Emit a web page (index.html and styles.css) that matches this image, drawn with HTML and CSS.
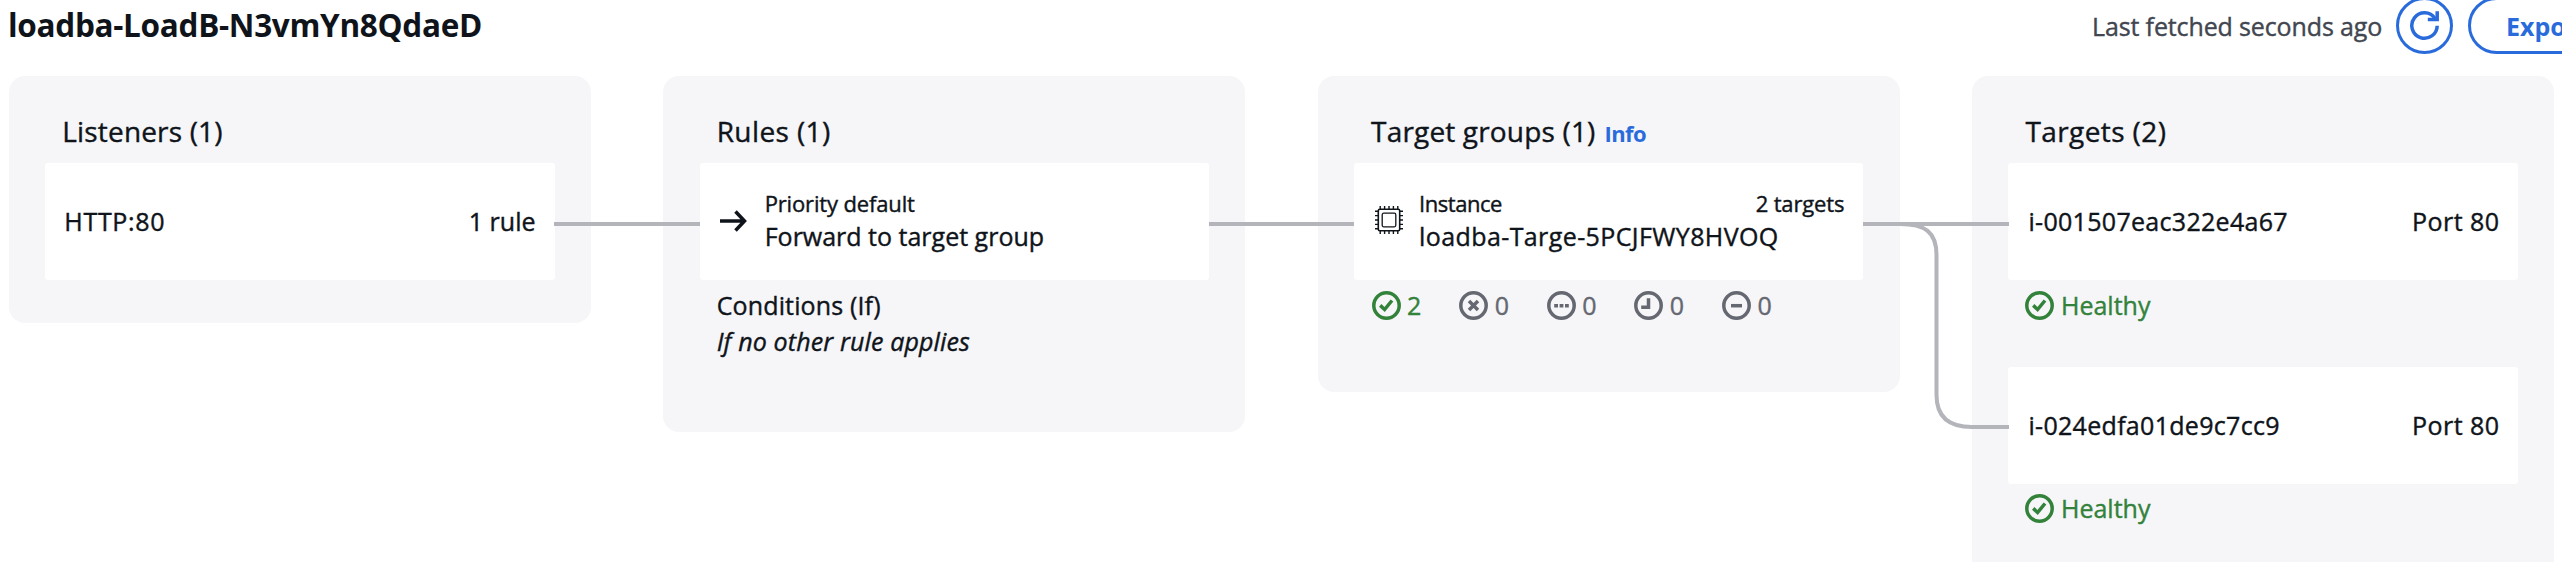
FILE: index.html
```html
<!DOCTYPE html>
<html lang="en">
<head>
<meta charset="utf-8">
<title>Resource map</title>
<link rel="stylesheet" href="styles.css">
</head>
<body>
<svg class="symbols" aria-hidden="true">
  <symbol id="ok" viewBox="0 0 29 29"><circle cx="14.5" cy="14.5" r="12.7" fill="none" stroke="currentColor" stroke-width="3.5"/><path d="M8.2 14.4l4.4 4.1 7.4-9" fill="none" stroke="currentColor" stroke-width="3.5"/></symbol>
  <symbol id="bad" viewBox="0 0 29 29"><circle cx="14.5" cy="14.5" r="12.7" fill="none" stroke="currentColor" stroke-width="3.5"/><path d="M10 10l9 9M19 10l-9 9" fill="none" stroke="currentColor" stroke-width="3.5"/></symbol>
  <symbol id="unused" viewBox="0 0 29 29"><circle cx="14.5" cy="14.5" r="12.7" fill="none" stroke="currentColor" stroke-width="3.5"/><path d="M7.2 13h3.8v3.5H7.2zM12.6 13h3.8v3.5h-3.8zM18 13h3.8v3.5H18z" fill="currentColor"/></symbol>
  <symbol id="pending" viewBox="0 0 29 29"><circle cx="14.5" cy="14.5" r="12.7" fill="none" stroke="currentColor" stroke-width="3.5"/><path d="M14.5 7.2v9H7.2" fill="none" stroke="currentColor" stroke-width="3.5"/></symbol>
  <symbol id="drain" viewBox="0 0 29 29"><circle cx="14.5" cy="14.5" r="12.7" fill="none" stroke="currentColor" stroke-width="3.5"/><path d="M9 14.7h11" fill="none" stroke="currentColor" stroke-width="3.5"/></symbol>
</svg>

<header class="header">
  <h1 class="title">loadba-LoadB-N3vmYn8QdaeD</h1>
  <div class="actions">
    <span class="fetched">Last fetched seconds ago</span>
    <button class="btn btn-round" aria-label="Refresh"><svg width="31" height="31" viewBox="0 0 31 31" fill="none" stroke="currentColor" stroke-width="3.5"><path d="M28.2 15.7A12.7 12.7 0 1 1 26 8.4"/><path d="M28.2 1.2v8.2H18.8"/></svg></button>
    <button class="btn btn-export">Export</button>
  </div>
</header>

<main class="map">
  <section class="card listeners">
    <h2 class="heading">Listeners (1)</h2>
    <div class="node"><span class="name wide">HTTP:80</span><span>1 rule</span></div>
  </section>

  <section class="card rules">
    <h2 class="heading loose">Rules (1)</h2>
    <div class="node">
      <svg class="arrow" width="27" height="22" viewBox="0 0 27 22" fill="none" stroke="currentColor" stroke-width="3.5"><path d="M0 11h24M15.5 1.5l9 9.5-9 9.5"/></svg>
      <div class="lines"><div class="small">Priority default</div><div class="forward">Forward to target group</div></div>
    </div>
    <div class="below">Conditions (If)</div>
    <div class="below italic">If no other rule applies</div>
  </section>

  <section class="card groups">
    <h2 class="heading">Target groups (1) <a class="info">Info</a></h2>
    <div class="node">
      <svg class="chip" width="28" height="28" viewBox="0 0 28 28" fill="none" stroke="currentColor"><rect x="3.3" y="3.3" width="21.4" height="21.4" rx="1.5" stroke-width="1.6"/><rect x="7.2" y="7.2" width="13.6" height="13.6" rx="1.5" stroke-width="1.3"/><path stroke-width="1.4" d="M5.2 0v3M9.6 0v3M14 0v3M18.4 0v3M22.8 0v3M5.2 25v3M9.6 25v3M14 25v3M18.4 25v3M22.8 25v3M0 5.2h3M0 9.6h3M0 14h3M0 18.4h3M0 22.8h3M25 5.2h3M25 9.6h3M25 14h3M25 18.4h3M25 22.8h3"/></svg>
      <div class="lines">
        <div class="small split"><span class="kind">Instance</span><span>2 targets</span></div>
        <div class="group-name">loadba-Targe-5PCJFWY8HVOQ</div>
      </div>
    </div>
    <div class="counts">
      <span class="status healthy"><svg class="icon"><use href="#ok"/></svg>2</span>
      <span class="status"><svg class="icon"><use href="#bad"/></svg>0</span>
      <span class="status"><svg class="icon"><use href="#unused"/></svg>0</span>
      <span class="status"><svg class="icon"><use href="#pending"/></svg>0</span>
      <span class="status"><svg class="icon"><use href="#drain"/></svg>0</span>
    </div>
  </section>

  <section class="card targets">
    <h2 class="heading loose">Targets (2)</h2>
    <div class="node"><span class="name id">i-001507eac322e4a67</span><span class="port">Port 80</span></div>
    <div class="status healthy"><svg class="icon"><use href="#ok"/></svg>Healthy</div>
    <div class="node second"><span class="name id">i-024edfa01de9c7cc9</span><span class="port">Port 80</span></div>
    <div class="status healthy last"><svg class="icon"><use href="#ok"/></svg>Healthy</div>
  </section>

  <svg class="links" width="2562" height="486" viewBox="0 76 2562 486" fill="none"><path d="M554 224H700M1209 224H1354M1863 224H2009M1900 224C1925 224 1936.5 232 1936.5 255V395C1936.5 416 1948 427 1972 427H2009"/></svg>
</main>
</body>
</html>
```
FILE: styles.css
```css
* { box-sizing: border-box; }
body {
  margin: 0;
  width: 2562px;
  height: 562px;
  overflow: hidden;
  background: #fff;
  color: #0f141a;
  font: 400 25px/36px "Open Sans", "Noto Sans", sans-serif;
  -webkit-text-stroke: 0.4px currentColor;
}
.symbols { display: none; }
svg { display: block; flex: none; }

.header {
  display: flex;
  justify-content: space-between;
  height: 79px;
  margin-top: -3px;
  padding-left: 8px;
  align-items: flex-start;
  overflow: hidden;
}
.title {
  margin: 6px 0 0;
  font-size: 31.5px;
  line-height: 44px;
  font-weight: 700;
  letter-spacing: -0.3px;
  -webkit-text-stroke: 0;
}
.actions { display: flex; align-items: center; width: 470px; height: 57px; }
.fetched { flex: none; width: 304px; color: #424650; letter-spacing: -0.13px; white-space: nowrap; }
.btn {
  flex: none;
  display: flex;
  align-items: center;
  height: 57px;
  border: 3px solid #2a6bdc;
  border-radius: 29px;
  background: #fff;
  color: #2a6bdc;
  font: 700 25px/36px "Open Sans", "Noto Sans", sans-serif;
}
.btn-round { width: 57px; padding: 0; justify-content: center; }
.btn-export { width: 160px; margin-left: 15px; padding: 0 35px; -webkit-text-stroke: 0; }

.map { position: relative; display: flex; align-items: flex-start; gap: 72.4px; padding-left: 9px; }
.card {
  flex: none;
  width: 582px;
  padding: 37px 36.5px 0 36.3px;
  border-radius: 16px;
  background: #f6f6f9;
}
.listeners { height: 247px; }
.rules { height: 356px; }
.groups { height: 316px; }
.targets { height: 486px; border-radius: 16px 16px 0 0; }
.heading {
  height: 36px;
  margin: 0 0 14px;
  padding-left: 17px;
  font-size: 28px;
  line-height: 36px;
  font-weight: 400;
  letter-spacing: 0.17px;
}
.loose { letter-spacing: 0.4px; }
.info { margin-left: 1.5px; font-size: 22px; line-height: 1; font-weight: 700; color: #2a6bdc; letter-spacing: -0.6px; -webkit-text-stroke: 0; }
.node {
  display: flex;
  align-items: center;
  height: 117px;
  padding: 0 19px 1px 18px;
  border-radius: 3px;
  background: #fff;
}
.name { flex: 1; }
.wide { letter-spacing: 0.7px; padding-left: 1px; }
.id { letter-spacing: 0.3px; padding-left: 2px; }
.port { letter-spacing: 0.5px; margin-right: -1px; }
.second { margin-top: 44px; }
.arrow { margin: -1px 18px 0 2px; }
.chip { margin: -3px 16px 0 3px; }
.lines { flex: 1; }
.small { font-size: 22px; line-height: 30px; letter-spacing: -0.15px; }
.split { display: flex; justify-content: space-between; }
.kind { letter-spacing: -0.46px; }
.forward { letter-spacing: 0; }
.group-name { letter-spacing: 0.4px; }
.below { padding-left: 17px; margin-top: 7px; letter-spacing: 0.14px; }
.below + .below { margin-top: 0; }
.italic { font-style: italic; }
.counts { display: flex; padding-left: 1px; }
.status { display: flex; align-items: center; gap: 6.5px; margin-top: 7px; padding-left: 17px; color: #656871; }
.counts .status { width: 87.6px; padding-left: 16.5px; }
.last { margin-top: 6px; }
.healthy { color: #33823a; }
.icon { width: 29px; height: 29px; }

/* connectors run over the cards, from the edge of one node to the next */
.links { position: absolute; left: 0; top: 0; pointer-events: none; }
.links path { stroke: #b4b4bb; stroke-width: 4; }
```
